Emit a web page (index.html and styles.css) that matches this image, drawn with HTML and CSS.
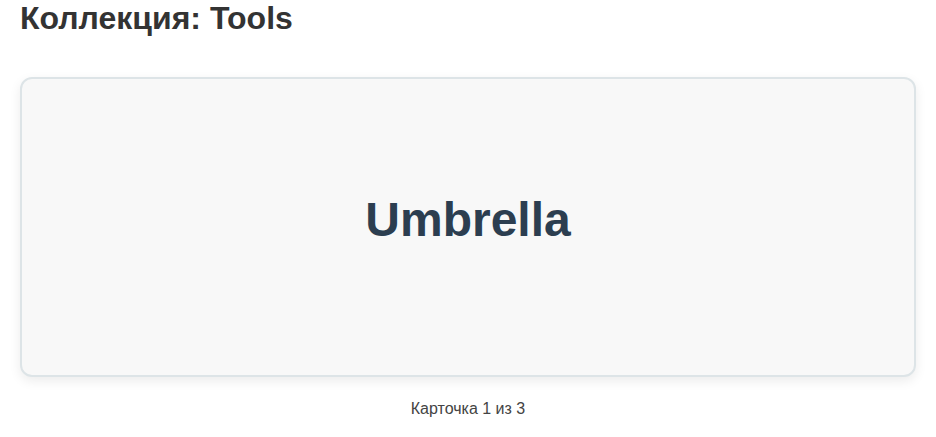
FILE: index.html
```html
<!DOCTYPE html>
<html lang="ru">
<head>
<meta charset="utf-8">
<title>Коллекция: Tools</title>
<link rel="stylesheet" href="styles.css">
</head>
<body>
<main class="page">
  <h1 class="title">Коллекция: Tools</h1>
  <section class="card">
    <div class="card-word">Umbrella</div>
  </section>
  <p class="counter">Карточка 1 из 3</p>
</main>
</body>
</html>
```

FILE: styles.css
```css
html, body {
  margin: 0;
  padding: 0;
  background: #ffffff;
}
body {
  font-family: "Liberation Sans", Arial, sans-serif;
  color: #333333;
}
.page {
  padding: 0 20px;
  display: flex;
  flex-direction: column;
}
.title {
  margin: 0;
  font-size: 32px;
  line-height: 37px;
  font-weight: bold;
  color: #333333;
}
.card {
  margin-top: 40px;
  height: 296px;
  background: #f8f8f8;
  border: 2px solid #dde4e7;
  border-radius: 12px;
  box-shadow: 0 4px 12px rgba(0, 0, 0, 0.08);
  display: flex;
  align-items: center;
  justify-content: center;
}
.card-word {
  font-size: 48px;
  font-weight: bold;
  color: #2c3e50;
  margin-bottom: 16px;
}
.counter {
  margin: 23px 0 0 0;
  text-align: center;
  font-size: 16px;
  line-height: 18px;
  color: #444444;
}
```
